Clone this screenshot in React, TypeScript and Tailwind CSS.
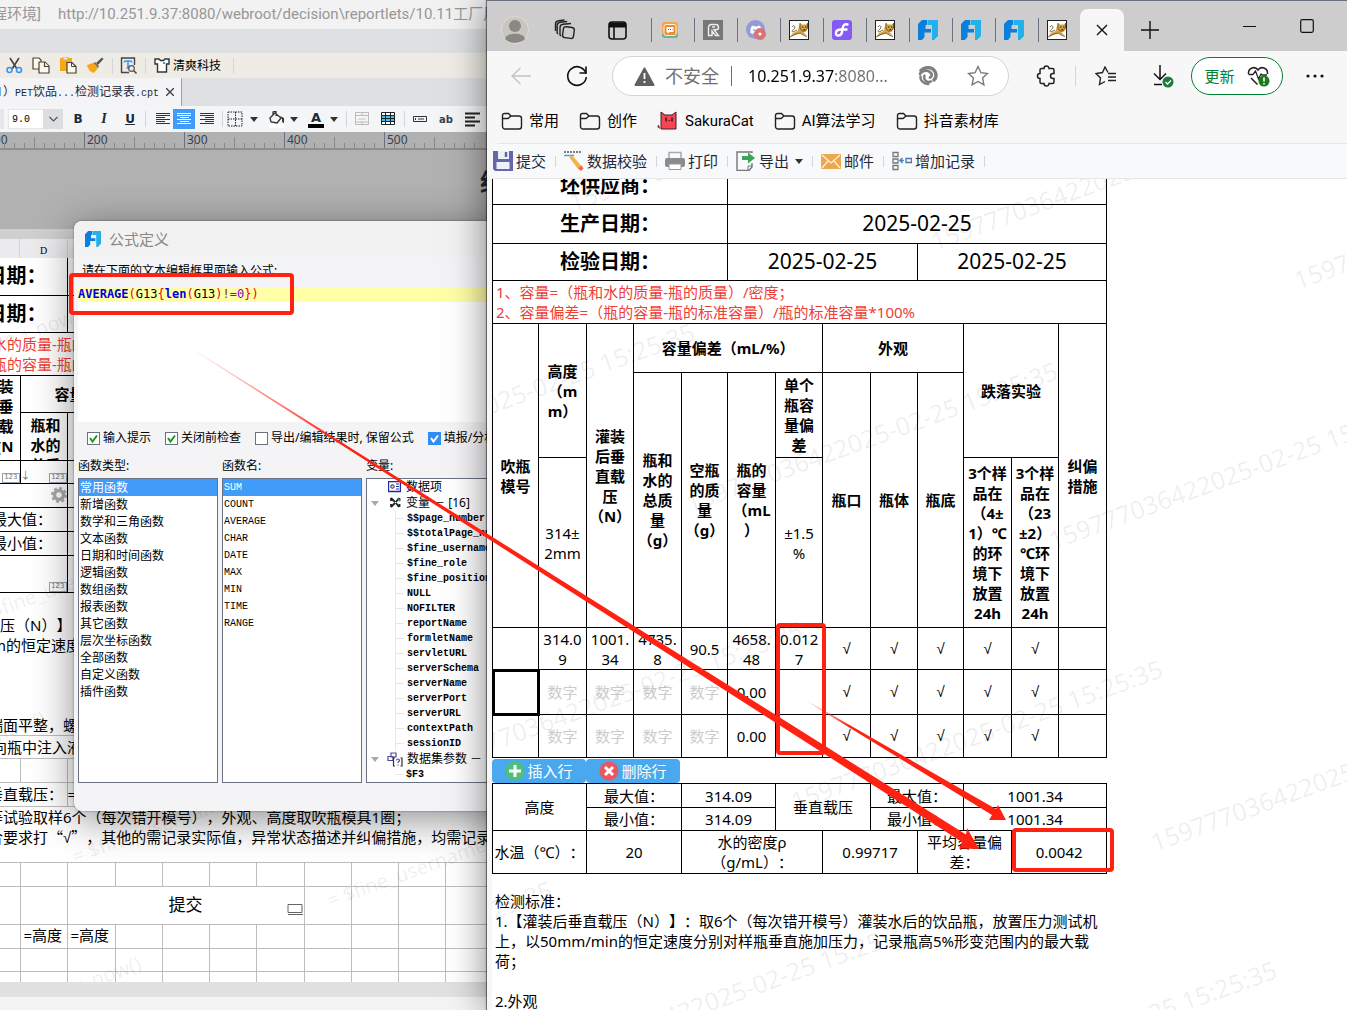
import type { ReactNode } from 'react';

const functionTypes = [
  '常用函数', '新增函数', '数学和三角函数', '文本函数', '日期和时间函数', '逻辑函数', '数组函数',
  '报表函数', '其它函数', '层次坐标函数', '全部函数', '自定义函数', '插件函数',
];

const functionNames = ['SUM', 'COUNT', 'AVERAGE', 'CHAR', 'DATE', 'MAX', 'MIN', 'TIME', 'RANGE'];

const variables = [
  '$$page_number', '$$totalPage_number', '$fine_username', '$fine_role', '$fine_position', 'NULL',
  'NOFILTER', 'reportName', 'formletName', 'servletURL', 'serverSchema', 'serverName', 'serverPort',
  'serverURL', 'contextPath', 'sessionID',
];

const browserMarks = [
  [81, 33], [443, 72], [806, 111],
  [-165, 295], [198, 334], [561, 371],
  [-57, 593], [303, 632], [663, 673],
  [-307, 853], [55, 892], [417, 933],
];

const sheetMarks = [
  [-140, 143], [-22, 366], [-180, 548], [75, 606], [330, 650], [-84, 794],
];

/* ---------- icons ---------- */

function FineIcon({ size = 20 }: { size?: number }) {
  return (
    <svg width={size} height={size} viewBox="0 0 20 20">
      <path d="M4 0h5v5H7.500v4H13v3.500H6.500V17L4 20H0V4z" fill="#0b7fdc" />
      <path d="M9.500 0H20v16l-4 4h-2V5H9.500z" fill="#22b1ea" />
    </svg>
  );
}

function CatIcon() {
  return (
    <svg width="20" height="20" viewBox="0 0 20 20">
      <rect x=".5" y=".5" width="19" height="19" fill="#fff" stroke="#222" />
      <path d="M11 3l2 1.500h3.500L19 3v5l-2 3.500-2.500.5 3.500 4-3.500-1.500-3-1.500-5 1.500-5 2 2-3 5-2.500z" fill="#d9a441" />
      <path d="M1 17l5-2.500 5-1.500 4 2.500 3 1M11 3v5l2 3h3l2.500-3V3M3 7c2-3 4 0 2 2s-3 2-1 3l4-2" fill="none" stroke="#5a4522" strokeWidth=".8" />
      <path d="M13 7h1.500M16 7h1.500M14.500 9.500h1.500" stroke="#222" />
    </svg>
  );
}

function FolderIcon() {
  return (
    <svg width="22" height="20" viewBox="0 0 22 20" fill="none" stroke="#222" strokeWidth="1.4">
      <path d="M1.500 4.500a2 2 0 0 1 2-2h4l2.500 2.500h8a2.500 2.500 0 0 1 2.500 2.500v8a2.500 2.500 0 0 1-2.500 2.500h-14a2.500 2.500 0 0 1-2.500-2.500z" />
      <path d="M1.500 7.500h5.500l3-2.500" />
    </svg>
  );
}

function Favicon({ kind }: { kind: string }) {
  switch (kind) {
    case 'chat':
      return (
        <svg width="20" height="20" viewBox="0 0 20 20">
          <rect x="2" y="2" width="16" height="16" rx="3" fill="#f3a44d" />
          <path d="M2 14v1a3 3 0 0 0 3 3h10a3 3 0 0 0 3-3v-1" fill="#65b59a" />
          <rect x="4" y="4.500" width="12" height="11" rx="2" fill="#e98c3a" stroke="#fff3d5" />
          <path d="M6.500 7h7v5h-4l-2 2v-2h-1z" fill="#fff" />
          <path d="M8 9.500h1M10 9.500h1M12 9.500h.5" stroke="#a05a20" />
        </svg>
      );
    case 'r':
      return (
        <svg width="20" height="20" viewBox="0 0 20 20">
          <rect width="20" height="20" fill="#777" />
          <path d="M5.500 15.500V8c0-2.500 1-3.500 3-3.500h4c2.500 0 3 1 3 2.700 0 1.600-.8 2.500-2.500 2.500H11l4.500 5.800h-3L9 11v4.500zM9 7h3" fill="none" stroke="#eee" strokeWidth="1.400" />
        </svg>
      );
    case 'discord':
      return (
        <svg width="20" height="20" viewBox="0 0 20 20">
          <circle cx="9.500" cy="9.500" r="9.500" fill="#959ad8" />
          <path d="M4.500 13c-.5-3 .5-6 1.500-7l2-.5.5 1h3l.5-1 2 .5c1 1 2 4 1.500 7l-2 1-1-1.500H8L7 14z" fill="#fff" />
          <circle cx="8" cy="10" r="1" fill="#959ad8" />
          <circle cx="14" cy="14" r="6" fill="#dc7373" />
          <circle cx="14" cy="14" r="1.600" fill="#fff" />
        </svg>
      );
    case 'purple':
      return (
        <svg width="20" height="20" viewBox="0 0 20 20">
          <rect width="20" height="20" rx="3" fill="#8559f4" />
          <path d="M15.500 4.500c-3-.8-4.300.6-4.800 3.500l-.7 4c-.4 2.400-1.600 3.500-3.500 3.500-2 0-2.900-1.300-2.500-3 .4-2 2-3 4.500-3h6" fill="none" stroke="#fff" strokeWidth="2.400" strokeLinecap="round" />
        </svg>
      );
    case 'cat':
      return <CatIcon />;
    default:
      return <FineIcon />;
  }
}

function AlignIcon({ kind, light }: { kind: 'left' | 'center' | 'right'; light?: boolean }) {
  const short = { left: 'M0 4.500h9M0 8.500h9', center: 'M3 4.500h9M3 8.500h9', right: 'M5 4.500h9M5 8.500h9' }[kind];
  return (
    <svg width="15" height="13" viewBox="0 0 15 13" stroke={light ? '#fff' : '#333'} fill="none">
      <path d="M0 .5h14M0 2.500h14M0 6.500h14M0 10.500h14" />
      <path d={short} />
    </svg>
  );
}

function Caret() {
  return (
    <svg width="8" height="5" viewBox="0 0 8 5" fill="#333">
      <path d="M0 0h8L4 5z" />
    </svg>
  );
}

function NumberBadge() {
  return (
    <span className="flex h-[10px] items-center border border-gray-400 bg-white px-px font-[family-name:'DejaVu_Sans',sans-serif] text-[7px] leading-none text-gray-500">
      123
    </span>
  );
}

/* ---------- designer window ---------- */

function ToolButton({ label, children, className = '' }: { label: string; children: ReactNode; className?: string }) {
  return (
    <button aria-label={label} className={`flex shrink-0 items-center justify-center ${className}`}>
      {children}
    </button>
  );
}

function DesignerToolbar() {
  return (
    <div className="flex h-[25px] shrink-0 items-center bg-[#efece5] pl-1">
      <ToolButton label="剪切" className="w-5">
        <svg width="17" height="17" viewBox="0 0 17 17" fill="none" strokeWidth="1.600">
          <path d="M4 1l7 11M13 1L6 12" stroke="#444" />
          <circle cx="3.500" cy="13" r="2.500" stroke="#3d93f5" />
          <circle cx="13" cy="13" r="2.500" stroke="#3d93f5" />
        </svg>
      </ToolButton>
      <ToolButton label="复制" className="ml-[7px] w-5">
        <svg width="18" height="17" viewBox="0 0 18 17" fill="#fff8e4" stroke="#444" strokeWidth="1.200">
          <path d="M1 1h6l2 2v9H1z" />
          <path d="M7 5h6l4 4v7H7z" />
          <path d="M12.500 5v4.500H17" />
        </svg>
      </ToolButton>
      <ToolButton label="粘贴" className="ml-[7px] w-5">
        <svg width="18" height="17" viewBox="0 0 18 17">
          <path d="M1 1h12v5H8v8H1z" fill="#f5a81c" />
          <path d="M4 0h5v3H4z" fill="#efece5" stroke="#f5a81c" />
          <path d="M8 5.500h5l4 4V16H8z" fill="#fff8e4" stroke="#444" strokeWidth="1.200" />
          <path d="M12.500 5.500v4H17" fill="none" stroke="#444" />
        </svg>
      </ToolButton>
      <ToolButton label="格式刷" className="ml-[7px] w-5">
        <svg width="17" height="17" viewBox="0 0 17 17">
          <path d="M9 6l6-5.500 1.500 1.500L11 8z" fill="#555" />
          <path d="M0 8l7-2.500 4.500 5L7 16C3 15 1 12 0 8z" fill="#f5a81c" />
          <path d="M7.500 5.500l4 4.500" stroke="#666" strokeWidth="1.600" />
        </svg>
      </ToolButton>
      <span className="ml-[7px] h-4 w-px bg-gray-300" />
      <ToolButton label="查找" className="ml-[7px] w-[17px]">
        <svg width="17" height="17" viewBox="0 0 17 17" fill="none">
          <path d="M9 15.500H1.500V1h13v7" stroke="#444" strokeWidth="1.400" />
          <path d="M4.500 4h7M8 4v7M6.500 11h3M4.500 4v1.500M11.500 4v1.500" stroke="#3d93f5" strokeWidth="1.600" />
          <circle cx="11.500" cy="11.500" r="2.800" stroke="#555" strokeWidth="1.200" />
          <path d="M13.500 13.500l3 3" stroke="#555" strokeWidth="1.600" />
        </svg>
      </ToolButton>
      <span className="ml-2 h-4 w-px bg-gray-300" />
      <button className="ml-2 flex items-center gap-[3px] text-xs text-black">
        <svg width="16" height="15" viewBox="0 0 16 15" fill="#fff" stroke="#333" strokeWidth="1.400">
          <path d="M1 1h4l1.500 1.500h3L11 1h4v5h-2.500v8h-9V6H1z" />
          <path d="M9 5h2" stroke="#3d93f5" strokeWidth="2" />
        </svg>
        清爽科技
      </button>
      <span className="ml-3 h-4 w-px bg-gray-300" />
    </div>
  );
}

function FormatToolbar() {
  return (
    <div className="flex h-[26px] shrink-0 items-center bg-[#f4f5f7]">
      <span className="h-5 w-1 bg-gray-200" />
      <label className="relative ml-1 flex h-5 w-[55px]">
        <select aria-label="字号" className="h-5 w-full appearance-none border border-gray-200 bg-white pl-[3px] font-[family-name:'Liberation_Mono',monospace] text-[10px] text-black">
          <option>9.0</option>
        </select>
        <span className="pointer-events-none absolute inset-y-0 right-0 flex w-5 items-center justify-center bg-[#dcdde0]">
          <svg width="9" height="6" viewBox="0 0 9 6" fill="none" stroke="#555" strokeWidth="1.200">
            <path d="M.5 1l4 4 4-4" />
          </svg>
        </span>
      </label>
      <button className="ml-1 w-[22px] font-[family-name:'DejaVu_Sans',sans-serif] text-xs font-bold text-gray-800">B</button>
      <button className="ml-1 w-[22px] font-[family-name:'Liberation_Serif',serif] text-sm font-bold text-gray-800 italic">I</button>
      <button className="ml-1 w-[22px] font-[family-name:'DejaVu_Sans',sans-serif] text-xs font-bold text-gray-800 underline">U</button>
      <span className="ml-1 h-4 w-px bg-gray-300" />
      <ToolButton label="左对齐" className="ml-[7px] h-5 w-5"><AlignIcon kind="left" /></ToolButton>
      <ToolButton label="居中" className="h-5 w-[22px] bg-[#419bf9]"><AlignIcon kind="center" light /></ToolButton>
      <ToolButton label="右对齐" className="ml-px h-5 w-[22px]"><AlignIcon kind="right" /></ToolButton>
      <span className="ml-1 h-4 w-px bg-gray-300" />
      <ToolButton label="边框" className="ml-1 gap-1.5">
        <svg width="17" height="16" viewBox="0 0 17 16" fill="none" stroke="#222">
          <path d="M1 1h14v14H1zM8.500 1v14M1 8h14" strokeDasharray="1.500 1" />
        </svg>
        <Caret />
      </ToolButton>
      <ToolButton label="填充颜色" className="ml-2.5 gap-1">
        <svg width="18" height="17" viewBox="0 0 18 17">
          <path d="M1 13h15v4H1z" fill="#fff" />
          <path d="M7 2l6 5-4 5-6-1-1-4zM5 5V1l3-1v5" fill="none" stroke="#333" strokeWidth="1.300" />
          <path d="M12 5l4 2v5c-2 0-2-2-2-4z" fill="#333" />
        </svg>
        <Caret />
      </ToolButton>
      <ToolButton label="字体颜色" className="ml-2.5 gap-1.5">
        <span className="w-4 border-b-4 border-black text-center font-[family-name:'DejaVu_Sans',sans-serif] text-[13px] leading-[13px] font-bold text-gray-800">A</span>
        <Caret />
      </ToolButton>
      <span className="ml-2 h-4 w-px bg-gray-300" />
      <ToolButton label="合并单元格" className="ml-2">
        <svg width="15" height="14" viewBox="0 0 15 14" fill="none" stroke="#bbb">
          <path d="M.5 .5h13v12H.5zM.5 3.500h13M.5 10h13M7 .5v3M7 10v3" />
          <path d="M3 7h8" strokeWidth="2" stroke="#ddd" />
        </svg>
      </ToolButton>
      <ToolButton label="表格" className="ml-[11px]">
        <svg width="15" height="14" viewBox="0 0 15 14">
          <path d="M.5 .5h13v12H.5z" fill="#fff" stroke="#222" />
          <path d="M1 4h12v5H1z" fill="#45c0f0" />
          <path d="M.5 3.500h13M.5 6.500h13M.5 9.500h13M4.500.5v12M9.500.5v12" stroke="#222" />
        </svg>
      </ToolButton>
      <span className="ml-2 h-4 w-px bg-gray-300" />
      <ToolButton label="文本控件" className="ml-2">
        <svg width="14" height="6" viewBox="0 0 14 6" fill="none" stroke="#333">
          <path d="M.5 .5h13v5H.5zM2.500 2v2M5 3h6" />
        </svg>
      </ToolButton>
      <button className="ml-3 font-[family-name:'DejaVu_Sans',sans-serif] text-[10px] font-bold text-gray-700">ab</button>
      <ToolButton label="缩进" className="ml-3">
        <svg width="15" height="15" viewBox="0 0 15 15" stroke="#222" strokeWidth="2">
          <path d="M0 1.500h15M0 5.500h10M0 9.500h15M0 13.500h10" />
        </svg>
      </ToolButton>
    </div>
  );
}

function Ruler() {
  return (
    <div className="h-[18px] shrink-0 overflow-hidden border-b-2 border-[#8e8e8e] bg-[#b1b1b1]">
      <div className="-ml-4 flex">
        {[100, 200, 300, 400, 500].map((n) => (
          <div key={n} className="grid h-4 w-[100px] shrink-0 border-l border-gray-500">
            <span className="pl-0.5 text-xs leading-4 text-gray-700 [grid-area:1/1]">{n}</span>
            <svg width="99" height="16" className="[grid-area:1/1]" stroke="#8a8a8a">
              <path d="M9.500 16v-5M19.500 16v-5M29.500 16v-5M39.500 16v-5M49.500 16V5M59.500 16v-5M69.500 16v-5M79.500 16v-5M89.500 16v-5" />
            </svg>
          </div>
        ))}
      </div>
    </div>
  );
}

function Sheet() {
  const b = 'border border-black p-0';
  const g = 'border border-[#bdbdbd] p-0';
  const blanks = (n: number) => Array.from({ length: n }, (_, i) => <td key={i} className={g} />);
  return (
    <table className="w-full table-fixed border-collapse border-hidden bg-white text-[15px] leading-5 text-black">
      <colgroup>
        {['w-5', 'w-[47px]', 'w-12', 'w-[47px]', 'w-[47px]', 'w-[47px]', 'w-12', 'w-[47px]', 'w-[47px]', 'w-[47px]'].map((w, i) => (
          <col key={i} className={w} />
        ))}
        <col />
      </colgroup>
      <tbody>
        {[37, 38].map((h) => (
          <tr key={h}>
            <td colSpan={2} className={`${b} h-[37px]`}>
              <div className="flex justify-end overflow-hidden pr-5 text-xl font-bold whitespace-nowrap">日期：</div>
            </td>
            <td colSpan={9} className={b} />
          </tr>
        ))}
        <tr>
          <td colSpan={11} className={`${b} h-[43px] text-[#ee4035]`}>
            <div className="-ml-2">水的质量-瓶的质量）/密度；</div>
            <div className="-ml-2">瓶的容量-瓶的标准容量）/瓶的标准容量*100%</div>
          </td>
        </tr>
        <tr>
          <td rowSpan={2} className={`${b} text-right align-top font-bold`}>
            <div className="flex h-[84px] flex-col items-end overflow-hidden pr-1.5">
              <span>装</span><span>垂</span><span>载</span><span>(N</span>
            </div>
          </td>
          <td colSpan={9} className={`${b} h-[37px] font-bold`}><div className="pl-[34px]">容量偏差</div></td>
          <td className={b} />
        </tr>
        <tr>
          <td className={`${b} text-center align-top font-bold`}>
            <div className="h-[47px] overflow-hidden pt-0.5 pl-1">瓶和<br />水的<br />总质</div>
          </td>
          <td colSpan={9} className={b} />
        </tr>
        <tr>
          <td className={`${b} h-[23px] align-bottom`}><div className="flex justify-end"><NumberBadge /></div></td>
          <td className={`${b} align-bottom`}>
            <div className="flex items-end justify-between">
              <span className="self-start text-[10px] leading-4 text-gray-500">↓</span>
              <NumberBadge />
            </div>
          </td>
          <td colSpan={9} className={b} />
        </tr>
        <tr>
          <td colSpan={2} className={`${b} h-6`}>
            <div className="flex justify-end">
              <svg width="16" height="16" viewBox="0 0 16 16" fill="none" stroke="#aaa">
                <circle cx="8" cy="8" r="4.500" strokeWidth="3.500" />
                <circle cx="8" cy="8" r="7" strokeWidth="2" strokeDasharray="3 2.500" />
              </svg>
            </div>
          </td>
          <td colSpan={9} className={b} />
        </tr>
        {['最大值：', '最小值：'].map((label) => (
          <tr key={label}>
            <td colSpan={2} className={`${b} h-6`}><div className="-ml-2 whitespace-nowrap">{label}</div></td>
            <td colSpan={9} className={b} />
          </tr>
        ))}
        <tr>
          <td colSpan={2} className={`${b} h-[37px] align-bottom`}><div className="flex justify-end"><NumberBadge /></div></td>
          <td colSpan={9} className={b} />
        </tr>
        <tr>
          <td colSpan={11} className={`${g} h-[143px] align-bottom`}>
            <div>压（N）】：取6个</div>
            <div className="-ml-2 pb-[60px]">m的恒定速度</div>
            <div className="-ml-3">端面平整，螺纹</div>
          </td>
        </tr>
        <tr><td colSpan={11} className={`${g} h-[23px]`}><div className="-ml-2">向瓶中注入液体</div></td></tr>
        <tr><td className={`${g} h-6`} />{blanks(10)}</tr>
        <tr><td colSpan={2} className={`${g} h-6`}><div className="-ml-3 whitespace-nowrap">垂直载压：</div></td><td colSpan={9} className={g}>=</td></tr>
        <tr>
          <td colSpan={11} className={`${g} h-14 align-top whitespace-nowrap`}>
            <div className="-ml-3 overflow-hidden">等试验取样6个（每次错开模号），外观、高度取吹瓶模具1圈；</div>
            <div className="-ml-3 overflow-hidden">
              合要求打
              <span className="font-[family-name:'Noto_Sans_CJK_SC',sans-serif]">“</span>
              <span className="font-[family-name:'Liberation_Sans',sans-serif]">√</span>
              <span className="font-[family-name:'Noto_Sans_CJK_SC',sans-serif]">”</span>
              ，其他的需记录实际值，异常状态描述并纠偏措施，均需记录
            </div>
          </td>
        </tr>
        <tr><td className={`${g} h-6`} />{blanks(10)}</tr>
        <tr>
          <td className={`${g} h-[38px]`} />
          <td className={g} />
          <td colSpan={5} className={`${g} text-center text-[17px]`}>
            <div className="grid">
              <span className="[grid-area:1/1]">提交</span>
              <svg width="17" height="11" viewBox="0 0 17 11" fill="none" stroke="#666" className="self-end justify-self-end [grid-area:1/1]">
                <path d="M1 .5h14v8H1zM1 10.500h15" />
              </svg>
            </div>
          </td>
          {blanks(4)}
        </tr>
        <tr>
          <td className={g} />
          {[0, 1].map((i) => (
            <td key={i} className={`${g} align-top`}>
              <div className="h-[23px] overflow-hidden pl-[3px] leading-5">=高度<br />与 值</div>
            </td>
          ))}
          {blanks(8)}
        </tr>
        <tr><td className={`${g} h-[23px]`} />{blanks(10)}</tr>
        <tr><td className={`${g} h-[11px]`} />{blanks(10)}</tr>
      </tbody>
    </table>
  );
}

function DesignerWindow() {
  return (
    <section className="absolute inset-0 flex flex-col bg-[#f4f4f6]">
      <div className="flex h-[29px] shrink-0 items-center overflow-hidden bg-[#f2f2f2] font-[family-name:Roboto,'Noto_Sans_CJK_SC',sans-serif] text-[15px] whitespace-nowrap text-[#979797]">
        <span className="-ml-2">程环境]</span>
        <span className="ml-[17px]">http://10.251.9.37:8080/webroot/decision\reportlets/10.11工厂用</span>
      </div>
      <div className="h-6 shrink-0 bg-[#dfe0e2]" />
      <DesignerToolbar />
      <div className="flex h-7 shrink-0 bg-[#dfe0e2]">
        <div className="flex w-[182px] items-center justify-end gap-[7px] overflow-hidden border-r border-gray-400 bg-[#f4f4f6] pr-[7px] text-xs whitespace-nowrap text-gray-800">
          <span>
            1）<span className="font-[family-name:'Liberation_Mono',monospace] text-[10px]">PET</span>饮品
            <span className="font-[family-name:'Liberation_Mono',monospace] text-[10px]">...</span>检测记录表
            <span className="font-[family-name:'Liberation_Mono',monospace] text-[10px]">.cpt</span>
          </span>
          <button aria-label="关闭" className="shrink-0">
            <svg width="8" height="8" viewBox="0 0 8 8" stroke="#444" strokeWidth="1.400"><path d="M0 0l8 8M8 0L0 8" /></svg>
          </button>
        </div>
      </div>
      <FormatToolbar />
      <Ruler />
      <div className="h-[79px] shrink-0 overflow-hidden bg-[#b1b1b1] pt-4 pl-[480px] text-2xl font-bold whitespace-nowrap text-gray-800">
        给
      </div>
      <div className="h-[10px] shrink-0 bg-[#cfcfd1]" />
      <div className="flex h-[19px] shrink-0 bg-[#ebebed] text-[10px] text-black">
        <span className="w-5 border-r border-gray-300" />
        <span className="w-12 border-r border-gray-300 pt-1 text-center font-[family-name:'Liberation_Serif',serif]">D</span>
      </div>
      <div className="relative shrink-0 overflow-hidden">
        <Sheet />
        <svg aria-hidden="true" className="pointer-events-none absolute inset-0 h-full w-full" fill="#000" fillOpacity="0.07" fontSize="20">
          {sheetMarks.map(([x, y], i) => (
            <text key={i} x={x} y={y} transform={`rotate(-20 ${x} ${y})`}>= $fine_username + now()</text>
          ))}
        </svg>
      </div>
      <div className="h-[15px] shrink-0 bg-[#e1e1e1]" />
    </section>
  );
}

/* ---------- formula dialog ---------- */

function Check({ label, checked, blue }: { label: string; checked?: boolean; blue?: boolean }) {
  return (
    <label className="flex shrink-0 items-center gap-[3px] text-xs text-black">
      <span className="grid">
        <input
          type="checkbox"
          defaultChecked={checked}
          className={`h-[13px] w-[13px] appearance-none border [grid-area:1/1] ${blue ? 'border-[#2f8df5] bg-[#2f8df5]' : 'border-gray-500 bg-white'}`}
        />
        {checked && (
          <svg width="13" height="13" viewBox="0 0 13 13" fill="none" stroke={blue ? '#fff' : '#1a9a1f'} strokeWidth="2" className="pointer-events-none [grid-area:1/1]">
            <path d="M3 6l2.500 3.500L10 3.500" />
          </svg>
        )}
      </span>
      {label}
    </label>
  );
}

function ListBox({ title, items, className = '' }: { title: string; items: string[]; className?: string }) {
  return (
    <div className="flex w-[140px] shrink-0 flex-col">
      <h3 className="h-6 text-xs leading-6 text-black">{title}</h3>
      <ul className="h-[305px] border border-gray-500 bg-white">
        {items.map((item, i) => (
          <li key={item}>
            <button className={`block h-[17px] w-full pl-px text-left leading-[17px] ${className} ${i === 0 ? 'bg-[#419bf9] text-white' : 'text-black'}`}>
              {item}
            </button>
          </li>
        ))}
      </ul>
    </div>
  );
}

function TreeArrow() {
  return (
    <svg width="8" height="5" viewBox="0 0 8 5" fill="#aaa"><path d="M0 0h8L4 5z" /></svg>
  );
}

function FormulaDialog() {
  return (
    <section className="absolute top-[221px] left-[74px] w-[480px] overflow-hidden rounded-[8px] bg-[#f4f4f7] shadow-[0_8px_40px_rgba(0,0,0,0.45),0_0_2px_rgba(0,0,0,0.5)]">
      <header className="flex h-9 items-center gap-2 bg-[#f2f2f2] pl-[11px] text-[15px] text-[#888]">
        <FineIcon size={16} />
        公式定义
      </header>
      <div className="pl-1">
        <label htmlFor="formula" className="block h-[30px] pt-1 pl-1 text-xs leading-5 text-black">
          请在下面的文本编辑框里面输入公式:
        </label>
        <div className="relative h-[135px] bg-white">
          <pre className="bg-[#ffffa8] font-[family-name:'DejaVu_Sans_Mono',monospace] text-[12px] leading-[15px] text-black">
            <b className="text-[#0000e0]">AVERAGE</b><span className="text-red-600">(</span>G13<span className="text-red-600">{'{'}</span>
            <b className="text-[#0000e0]">len</b><span className="text-red-600">(</span>G13<span className="text-red-600">)</span>
            <span className="text-amber-900">!=</span><span className="text-purple-700">0</span><span className="text-red-600">{'})'}</span>
          </pre>
          <textarea id="formula" className="absolute inset-0 h-full w-full resize-none bg-transparent outline-none" />
        </div>
        <div className="flex h-8 items-center gap-[14px] pl-[9px] whitespace-nowrap">
          <Check label="输入提示" checked />
          <Check label="关闭前检查" checked />
          <Check label="导出/编辑结果时, 保留公式" />
          <Check label="填报/分析" checked blue />
        </div>
        <div className="flex gap-1 pb-7">
          <ListBox title="函数类型:" items={functionTypes} className="text-xs" />
          <ListBox title="函数名:" items={functionNames} className="font-[family-name:'Liberation_Mono',monospace] text-[10px]" />
          <div className="flex-1">
            <h3 className="h-6 text-xs leading-6 text-black">变量:</h3>
            <div className="h-[305px] overflow-hidden border border-gray-500 bg-white text-xs leading-4 whitespace-nowrap text-black">
              <div className="flex items-center pl-[21px]">
                <svg width="13" height="12" viewBox="0 0 13 12" fill="none" stroke="#1c2d9c">
                  <path d="M.5 .5h12v10H.5z" strokeWidth="1.400" />
                  <path d="M8 3h3M8 5.500h3M8 8h3" />
                  <circle cx="4.500" cy="5.500" r="1.800" fill="#e8d533" />
                </svg>
                <span className="pl-[5px]">数据项</span>
              </div>
              <div className="flex items-center pl-1">
                <TreeArrow />
                <svg width="11" height="12" viewBox="0 0 11 12" fill="none" stroke="#222" strokeWidth="1.800" className="ml-[11px]">
                  <path d="M1 1l4 4M9 1L6 5M1 10l4-4M9 10L6 6M1 1v3M9.500 1v3M1 7v3M9.500 7v3" />
                  <path d="M8 2l2 2" stroke="#3f9c4d" />
                </svg>
                <span className="pl-[5px]">变量 － [16]</span>
              </div>
              <ul className="ml-7 border-l border-gray-200 font-[family-name:'Liberation_Mono',monospace] text-[10px] font-bold">
                {variables.map((v) => (
                  <li key={v} className="flex h-[15px] items-center gap-[3px]">
                    <span className="h-px w-2 bg-gray-200" />
                    {v}
                  </li>
                ))}
              </ul>
              <div className="flex items-center pl-1">
                <TreeArrow />
                <svg width="16" height="15" viewBox="0 0 16 15" fill="none" stroke="#4a4d9c" strokeWidth="1.200" className="ml-2">
                  <path d="M4 1h5v4H4zM1 4.500h5v4H1z" fill="#fff" />
                  <path d="M8 6H6.500v8H8M13.500 6H15v8h-1.500" stroke="#333" />
                  <path d="M9.500 8.500c0-2 3-2 3 0 0 1.200-1.500 1-1.500 2.500M11 12.500v1" />
                </svg>
                <span className="pl-1">数据集参数 －</span>
              </div>
              <div className="ml-7 flex h-[15px] items-center gap-[3px] font-[family-name:'Liberation_Mono',monospace] text-[10px] font-bold">
                <span className="h-px w-2 bg-gray-200" />
                $F3
              </div>
            </div>
          </div>
        </div>
      </div>
    </section>
  );
}

/* ---------- browser window ---------- */

function TabStrip() {
  const tabs = ['chat', 'r', 'discord', 'cat', 'purple', 'cat', 'fine', 'fine', 'fine', 'cat'];
  return (
    <div className="flex h-[50px] shrink-0 items-center bg-[#cdcdcd] pt-2">
      <ToolButton label="个人资料" className="ml-3.5">
        <svg width="28" height="28" viewBox="0 0 28 28">
          <circle cx="14" cy="14" r="13.500" fill="#c9c6c2" stroke="#dedbd7" />
          <circle cx="14" cy="10" r="6" fill="#8b8783" />
          <path d="M4 23c1-7 19-7 20 0-5 5-15 5-20 0z" fill="#8b8783" />
        </svg>
      </ToolButton>
      <ToolButton label="工作区" className="ml-[25px]">
        <svg width="22" height="22" viewBox="0 0 22 22" fill="none" stroke="#222" strokeWidth="1.400">
          <rect x="9" y="8" width="11" height="11" rx="2.500" transform="rotate(8 14 13)" />
          <path d="M7 17l-1-1V8.500c0-2 1-3 3-3.200l8-.8M4 15l-.8-1V6.500c0-2 1-3 3-3.200l7-.8M1.500 12V5c0-2 1-3 3-3.200l6-.8" />
        </svg>
      </ToolButton>
      <ToolButton label="标签页操作" className="ml-8">
        <svg width="19" height="19" viewBox="0 0 19 19" fill="none" stroke="#111" strokeWidth="1.600">
          <rect x="1" y="1" width="17" height="17" rx="3" />
          <path d="M1 4h17" strokeWidth="5" />
          <path d="M6 5v13" />
        </svg>
      </ToolButton>
      <div className="ml-[24px] flex">
        {tabs.map((kind, i) => (
          <button key={i} aria-label={`标签页 ${i + 1}`} className="flex h-6 w-[43px] items-center border-l border-gray-500 pl-2">
            <Favicon kind={kind} />
          </button>
        ))}
      </div>
      <div className="-ml-px flex h-[42px] w-11 items-center justify-center rounded-t-lg bg-[#f7f7f7]">
        <ToolButton label="关闭标签页">
          <svg width="12" height="12" viewBox="0 0 12 12" stroke="#111" strokeWidth="1.400"><path d="M1 1l10 10M11 1L1 11" /></svg>
        </ToolButton>
      </div>
      <ToolButton label="新建标签页" className="ml-[17px]">
        <svg width="18" height="18" viewBox="0 0 18 18" stroke="#111" strokeWidth="1.400"><path d="M9 0v18M0 9h18" /></svg>
      </ToolButton>
      <div className="mr-[33px] mb-2 ml-auto flex items-center gap-11">
        <ToolButton label="最小化">
          <svg width="13" height="13" viewBox="0 0 13 13" stroke="#111"><path d="M0 6.500h13" /></svg>
        </ToolButton>
        <ToolButton label="最大化">
          <svg width="14" height="14" viewBox="0 0 14 14" fill="none" stroke="#111" strokeWidth="1.200"><rect x=".7" y=".7" width="12.600" height="12.600" rx="1.500" /></svg>
        </ToolButton>
      </div>
    </div>
  );
}

function AddressRow() {
  return (
    <div className="flex h-[50px] shrink-0 items-center pl-[7px]">
      <ToolButton label="后退" className="w-[55px]">
        <svg width="21" height="18" viewBox="0 0 21 18" fill="none" stroke="#c4c4c4" strokeWidth="1.400"><path d="M20 9H1M9.500 1L1 9l8.500 8" /></svg>
      </ToolButton>
      <ToolButton label="刷新" className="w-[55px]">
        <svg width="22" height="22" viewBox="0 0 22 22" fill="none" stroke="#111" strokeWidth="1.600">
          <path d="M20 8.500A9.300 9.300 0 1 0 20.300 12" />
          <path d="M20 1.500V8h-6.500" />
        </svg>
      </ToolButton>
      <div className="ml-2 flex h-10 min-w-0 flex-1 items-center rounded-full border border-gray-300 bg-white pr-[19px] pl-[21px]">
        <svg width="21" height="19" viewBox="0 0 21 19">
          <path d="M10.500 1.500L19.500 18h-18z" fill="#606060" stroke="#606060" strokeWidth="2" strokeLinejoin="round" />
          <path d="M10.500 6v6M10.500 14v2" stroke="#fff" strokeWidth="1.800" />
        </svg>
        <span className="ml-[10px] shrink-0 text-lg leading-6 text-[#707070]">不安全</span>
        <span className="ml-3 h-5 w-px shrink-0 bg-gray-500" />
        <input
          aria-label="地址"
          defaultValue="10.251.9.37:8080..."
          className="ml-4 w-[160px] min-w-0 bg-linear-to-r from-black from-[86px] to-[#707070] to-[86px] bg-clip-text text-base text-transparent outline-none"
        />
        <ToolButton label="兼容模式" className="ml-auto">
          <svg width="20" height="20" viewBox="0 0 20 20" fill="none" stroke="#808080" strokeLinecap="round">
            <path d="M3 4.500C7 .5 14 .5 17 5.500c1.500 3 1 6.500-1 8.500" strokeWidth="3.400" />
            <path d="M2 8c1.500-3.500 7-4.500 10.500-1.500 2 2 1.500 4-.5 5" strokeWidth="2.800" />
            <path d="M2.500 10.500c-.5 4 3.500 8 8 7.500M6.500 9.500c-1.500 4 2 7.500 6.500 6" strokeWidth="2.400" />
          </svg>
        </ToolButton>
        <ToolButton label="收藏" className="ml-[29px]">
          <svg width="22" height="22" viewBox="0 0 22 22" fill="none" stroke="#777" strokeWidth="1.400">
            <path d="M11 1.500l2.900 6.200 6.600.8-4.900 4.600 1.300 6.700-5.900-3.300-5.900 3.300 1.300-6.700-4.900-4.600 6.600-.8z" />
          </svg>
        </ToolButton>
      </div>
      <ToolButton label="扩展" className="ml-2 w-[58px]">
        <svg width="20" height="22" viewBox="0 0 20 22" fill="none" stroke="#222" strokeWidth="1.500">
          <path d="M5.500 3.500H8a2.500 2.500 0 0 1 5 0h3.500A1.500 1.500 0 0 1 18 5v3.500h-1a2.500 2.500 0 0 0 0 5h1V17a1.500 1.500 0 0 1-1.500 1.500H13a2.500 2.500 0 0 1-5 0H5.500A1.500 1.500 0 0 1 4 17v-3.500a2.500 2.500 0 0 1 0-5V5a1.500 1.500 0 0 1 1.500-1.500z" />
        </svg>
      </ToolButton>
      <span className="h-5 w-px bg-gray-300" />
      <ToolButton label="收藏夹" className="w-[59px]">
        <svg width="22" height="20" viewBox="0 0 22 20" fill="none" stroke="#222" strokeWidth="1.400">
          <path d="M13 6.500L10 1 7.500 6.500l-6.500 1 4.500 4.500-1 6.500 5.500-3" />
          <path d="M13 7.500h8M13 11h8M13 14.500h8" />
        </svg>
      </ToolButton>
      <ToolButton label="下载" className="w-[56px]">
        <svg width="22" height="24" viewBox="0 0 22 24" fill="none">
          <path d="M8 1v14M2 9.500l6 6 6-6M2 20.500h8" stroke="#111" strokeWidth="1.500" />
          <circle cx="16" cy="18" r="5.500" fill="#1c7c3c" />
          <path d="M13.500 18l2 2 3.500-3.500" stroke="#fff" strokeWidth="1.300" />
        </svg>
      </ToolButton>
      <button className="flex h-[38px] w-[92px] shrink-0 items-center justify-center gap-3 rounded-full border border-green-700 bg-white text-[15px] text-green-700">
        更新
        <svg width="23" height="21" viewBox="0 0 23 21" fill="none">
          <path d="M1.500 8C1 2 8-.5 11 4c3-4.500 10-2 9.500 4M4 12l6.500 6.500" stroke="#222" strokeWidth="1.500" />
          <path d="M1.500 8.500h4.500l2.500-3.500 3 8 2.500-5 1 1h5" stroke="#222" strokeWidth="1.300" />
          <circle cx="17" cy="15" r="5.500" fill="#1a7a1a" />
          <path d="M17 11.500v4M17 17v1.500" stroke="#fff" strokeWidth="1.600" />
        </svg>
      </button>
      <ToolButton label="更多" className="w-16">
        <svg width="18" height="4" viewBox="0 0 18 4" fill="#111"><circle cx="2" cy="2" r="1.600" /><circle cx="9" cy="2" r="1.600" /><circle cx="16" cy="2" r="1.600" /></svg>
      </ToolButton>
    </div>
  );
}

function Bookmarks() {
  return (
    <nav className="flex h-[42px] shrink-0 items-center gap-5 pb-0.5 pl-3.5 font-[family-name:Roboto,'Noto_Sans_CJK_SC',sans-serif] text-[15px] whitespace-nowrap text-black">
      {['常用', '创作', 'SakuraCat', 'AI算法学习', '抖音素材库'].map((name) => (
        <a key={name} href="#" className="flex items-center gap-[6px]">
          {name === 'SakuraCat' ? (
            <svg width="22" height="20" viewBox="0 0 22 20">
              <path d="M3 17c-3 0-2-3-1-3M4 18V1l4 3h7l4-3v17z" fill="#fa4453" stroke="#3a2225" strokeWidth="1" />
              <path d="M9 6.500v4M15 6.500v4" stroke="#222" strokeWidth="1.500" />
              <path d="M11.500 9.500h1.500" stroke="#222" />
            </svg>
          ) : (
            <FolderIcon />
          )}
          {name}
        </a>
      ))}
    </nav>
  );
}

function ReportTool({ label, children, caret }: { label: string; children: ReactNode; caret?: boolean }) {
  return (
    <>
      <button className="flex shrink-0 items-center gap-[3px]">
        <svg width="20" height="20" viewBox="0 0 20 20" fill="none">{children}</svg>
        {label}
        {caret && <span className="ml-[3px]"><Caret /></span>}
      </button>
      <span className="mr-2 ml-[9px] h-[11px] w-px shrink-0 bg-gray-300" />
    </>
  );
}

function ReportToolbar() {
  return (
    <div className="flex h-9 shrink-0 items-center border-y border-gray-200 bg-[#f7f9fb] pl-px text-[15px] text-gray-800">
      <ReportTool label="提交">
        <path d="M0 0h20v20H2l-2-2z" fill="#6468a8" />
        <path d="M5 0h11v8H5zM3.500 11h13v7h-13z" fill="#eef0f8" />
        <path d="M13 1v5" stroke="#6468a8" strokeWidth="2.500" />
      </ReportTool>
      <ReportTool label="数据校验">
        <path d="M0 1h18" stroke="#555" strokeDasharray="2 1" strokeWidth="1.500" />
        <path d="M0 4.500h10" stroke="#4d9ee8" strokeWidth="1.500" />
        <path d="M5 6l3.500-1 9 10-3.500 3z" fill="#f3b04b" />
        <path d="M14 17.500l3.500-3 2 3-2.500 2.500z" fill="#f2673f" />
      </ReportTool>
      <ReportTool label="打印">
        <path d="M4 1.500h12V8H4z" stroke="#aaa" strokeWidth="1.500" />
        <rect y="7" width="20" height="9" rx="2" fill="#8b8b8b" />
        <path d="M4 13h12v5.500H4z" fill="#fff" stroke="#999" />
      </ReportTool>
      <ReportTool label="导出" caret>
        <path d="M16 12v4l-3 3.500H1V1h15v1" stroke="#777" strokeWidth="1.400" />
        <path d="M6 5h6V1.500L19 7l-7 5.500V9H6z" fill="#3aa655" />
        <path d="M12 19v-4h4" stroke="#777" />
      </ReportTool>
      <ReportTool label="邮件">
        <rect y="3" width="20" height="15" rx="1" fill="#eba84e" />
        <path d="M1 4l9 8 9-8M1 17l6-7M19 17l-6-7" stroke="#fdf0d8" strokeWidth="1.300" />
      </ReportTool>
      <ReportTool label="增加记录">
        <path d="M1 1.500h5v4H1zM1 8h5v4H1zM1 14.500h5v4H1z" stroke="#777" strokeWidth="1.300" />
        <path d="M8 9.500h4M10.500 7L8 9.500 10.500 12" stroke="#3d88d8" strokeWidth="1.500" />
        <path d="M14 7.500h5.500v4H14z" stroke="#557799" strokeWidth="1.300" />
      </ReportTool>
    </div>
  );
}

function Cell({ text = '', bold, className = '', ...span }: { text?: string; bold?: boolean; className?: string; colSpan?: number; rowSpan?: number }) {
  return (
    <td
      {...span}
      className={`border border-black p-0 text-center whitespace-pre ${bold ? 'font-bold' : ''} ${text === '√' ? "font-[family-name:'Liberation_Sans',sans-serif]" : ''} ${className}`}
    >
      {text}
    </td>
  );
}

function Columns() {
  const widths = [
    'w-[46px]', 'w-12', 'w-[47px]', 'w-12', 'w-[46px]', 'w-12', 'w-[47px]', 'w-12', 'w-[47px]', 'w-[46px]', 'w-12', 'w-[47px]', 'w-12',
  ];
  return (
    <colgroup>
      {widths.map((w, i) => <col key={i} className={w} />)}
    </colgroup>
  );
}

function RecordTable() {
  return (
    <table className="-mt-3 w-[615px] table-fixed border-collapse text-[15px] leading-5">
      <Columns />
      <tbody>
        <tr className="h-[37px] text-xl">
          <Cell colSpan={5} text="坯供应商：" bold />
          <Cell colSpan={8} />
        </tr>
        <tr className="h-[39px] text-xl">
          <Cell colSpan={5} text="生产日期：" bold />
          <Cell colSpan={8} text="2025-02-25" className="text-[21px]" />
        </tr>
        <tr className="h-[37px] text-xl">
          <Cell colSpan={5} text="检验日期：" bold />
          <Cell colSpan={4} text="2025-02-25" className="text-[21px]" />
          <Cell colSpan={4} text="2025-02-25" className="text-[21px]" />
        </tr>
        <tr className="h-[43px]">
          <td colSpan={13} className="border border-black p-0 pl-[3px] text-[#ee4035]">
            1、容量=（瓶和水的质量-瓶的质量）/密度；
            <br />
            2、容量偏差=（瓶的容量-瓶的标准容量）/瓶的标准容量*100%
          </td>
        </tr>
        <tr className="h-[49px]">
          <Cell rowSpan={3} bold text={'吹瓶\n模号'} />
          <Cell rowSpan={2} bold text={'高度\n（m\nm）'} />
          <Cell rowSpan={3} bold text={'灌装\n后垂\n直载\n压\n（N）'} />
          <Cell colSpan={4} bold text="容量偏差（mL/%）" />
          <Cell colSpan={3} bold text="外观" />
          <Cell colSpan={2} rowSpan={2} bold text="跌落实验" />
          <Cell rowSpan={3} bold text={'纠偏\n措施'} />
        </tr>
        <tr className="h-[85px]">
          <Cell rowSpan={2} bold text={'瓶和\n水的\n总质\n量\n（g）'} />
          <Cell rowSpan={2} bold text={'空瓶\n的质\n量\n（g）'} />
          <Cell rowSpan={2} bold text={'瓶的\n容量\n（mL\n）'} />
          <Cell bold text={'单个\n瓶容\n量偏\n差'} />
          <Cell rowSpan={2} bold text="瓶口" />
          <Cell rowSpan={2} bold text="瓶体" />
          <Cell rowSpan={2} bold text="瓶底" />
        </tr>
        <tr className="h-[170px]">
          <Cell text={'314±\n2mm'} />
          <Cell text={'±1.5\n%'} />
          <Cell bold text={'3个样\n品在\n（4±\n1）℃\n的环\n境下\n放置\n24h'} />
          <Cell bold text={'3个样\n品在\n（23\n±2）\n℃环\n境下\n放置\n24h'} />
        </tr>
        <tr className="h-[42px]">
          {['', '314.0\n9', '1001.\n34', '4735.\n8', '90.5', '4658.\n48', '0.012\n7', '√', '√', '√', '√', '√', ''].map((text, i) => (
            <Cell key={i} text={text} />
          ))}
        </tr>
        {[0, 1].map((row) => (
          <tr key={row} className={row === 0 ? 'h-[45px]' : 'h-[43px]'}>
            <td className={`border border-black p-0 ${row === 0 ? 'outline-[3px] -outline-offset-2 outline-black' : ''}`} />
            {[0, 1, 2, 3].map((i) => (
              <td key={i} className="border border-black p-0">
                <input aria-label={`数字 ${row}-${i}`} placeholder="数字" className="w-full text-center outline-none placeholder:text-[#ccc]" />
              </td>
            ))}
            {['0.00', '', '√', '√', '√', '√', '√', ''].map((text, i) => <Cell key={i} text={text} />)}
          </tr>
        ))}
      </tbody>
    </table>
  );
}

function SummaryTable() {
  return (
    <table className="w-[615px] table-fixed border-collapse text-[15px] leading-5">
      <Columns />
      <tbody>
        <tr className="h-6">
          <Cell colSpan={2} rowSpan={2} text="高度" />
          <Cell colSpan={2} text="最大值：" />
          <Cell colSpan={2} text="314.09" />
          <Cell colSpan={2} rowSpan={2} text="垂直载压" />
          <Cell colSpan={2} text="最大值：" />
          <Cell colSpan={3} text="1001.34" />
        </tr>
        <tr className="h-[23px]">
          <Cell colSpan={2} text="最小值：" />
          <Cell colSpan={2} text="314.09" />
          <Cell colSpan={2} text="最小值：" />
          <Cell colSpan={3} text="1001.34" />
        </tr>
        <tr className="h-[43px]">
          <Cell colSpan={2} text="水温（℃）：" />
          <Cell colSpan={2} text="20" />
          <Cell colSpan={3} text={'水的密度ρ\n（g/mL）：'} />
          <Cell colSpan={2} text="0.99717" />
          <Cell colSpan={2} text={'平均容量偏\n差：'} />
          <Cell colSpan={2} text="0.0042" />
        </tr>
      </tbody>
    </table>
  );
}

function BrowserWindow() {
  return (
    <section className="absolute inset-y-0 right-0 left-[487px] flex flex-col border-t border-gray-500 bg-[#f7f7f7] shadow-[0_0_36px_rgba(0,0,0,0.5),0_0_1px_1px_rgba(0,0,0,0.45)]">
      <TabStrip />
      <AddressRow />
      <Bookmarks />
      <div className="ml-[5px] flex min-h-0 flex-1 flex-col overflow-hidden rounded-tl-lg bg-white">
        <ReportToolbar />
        <main className="relative min-h-0 flex-1 overflow-hidden text-black">
          <RecordTable />
          <div className="flex h-[25px] items-center text-[15px] leading-5 text-white">
            <button className="flex h-6 w-[94px] items-center justify-center gap-[2px] rounded bg-[#49a8ee]">
              <svg width="20" height="20" viewBox="0 0 20 20">
                <circle cx="10" cy="10" r="9.500" fill="#4fc078" />
                <path d="M10 4v12M4 10h12" stroke="#fff" strokeWidth="3" />
              </svg>
              插入行
            </button>
            <button className="flex h-6 w-[94px] items-center justify-center gap-[2px] rounded bg-[#49a8ee]">
              <svg width="20" height="20" viewBox="0 0 20 20">
                <circle cx="10" cy="10" r="9.500" fill="#e8585e" />
                <path d="M6 6l8 8M14 6l-8 8" stroke="#fff" strokeWidth="3" />
              </svg>
              删除行
            </button>
          </div>
          <SummaryTable />
          <div className="pt-[17px] pl-[3px] text-[15px] leading-5 whitespace-nowrap">
            <p>检测标准：</p>
            <p>
              1.【灌装后垂直载压（N）】：取6个（每次错开模号）灌装水后的饮品瓶，放置压力测试机
              <br />
              上，以50mm/min的恒定速度分别对样瓶垂直施加压力，记录瓶高5%形变范围内的最大载
              <br />
              荷；
            </p>
            <p className="pt-5">2.外观</p>
          </div>
          <svg aria-hidden="true" className="pointer-events-none absolute inset-0 h-full w-full" fill="#000" fillOpacity="0.07" fontSize="25">
            {browserMarks.map(([x, y], i) => (
              <text key={i} x={x} y={y} transform={`rotate(-20 ${x} ${y})`}>159777036422025-02-25 15:25:35</text>
            ))}
          </svg>
        </main>
      </div>
    </section>
  );
}

/* ---------- red boxes and arrows drawn over both windows ---------- */

function Annotations() {
  return (
    <svg className="pointer-events-none absolute inset-0 h-full w-full" fill="none">
      <defs>
        <linearGradient id="fadeLong" gradientUnits="userSpaceOnUse" x1="190" y1="347" x2="340" y2="443">
          <stop offset="0" stopColor="#ff2213" stopOpacity="0" />
          <stop offset="1" stopColor="#ff2213" />
        </linearGradient>
        <linearGradient id="fadeShort" gradientUnits="userSpaceOnUse" x1="806" y1="700" x2="850" y2="726">
          <stop offset="0" stopColor="#ff2213" stopOpacity="0" />
          <stop offset="1" stopColor="#ff2213" />
        </linearGradient>
      </defs>
      <g stroke="#ff2213" strokeWidth="4">
        <rect x="71" y="275" width="221" height="38" rx="2" />
        <rect x="778" y="625" width="46" height="128" rx="2" />
        <rect x="1014" y="830" width="98" height="40" rx="2" />
      </g>
      <path d="M190 347L966 834.500L967 828L979 849L959 848.500L962 842L190 348z" fill="url(#fadeLong)" />
      <path d="M806 700L996 809L998 805L1006 820L989 820L992 815L806 701z" fill="url(#fadeShort)" />
    </svg>
  );
}

export default function App() {
  return (
    <div className="relative h-screen overflow-hidden bg-white font-[family-name:'Noto_Sans','Noto_Sans_CJK_SC',sans-serif] [text-spacing-trim:space-all]">
      <DesignerWindow />
      <FormulaDialog />
      <BrowserWindow />
      <Annotations />
    </div>
  );
}
